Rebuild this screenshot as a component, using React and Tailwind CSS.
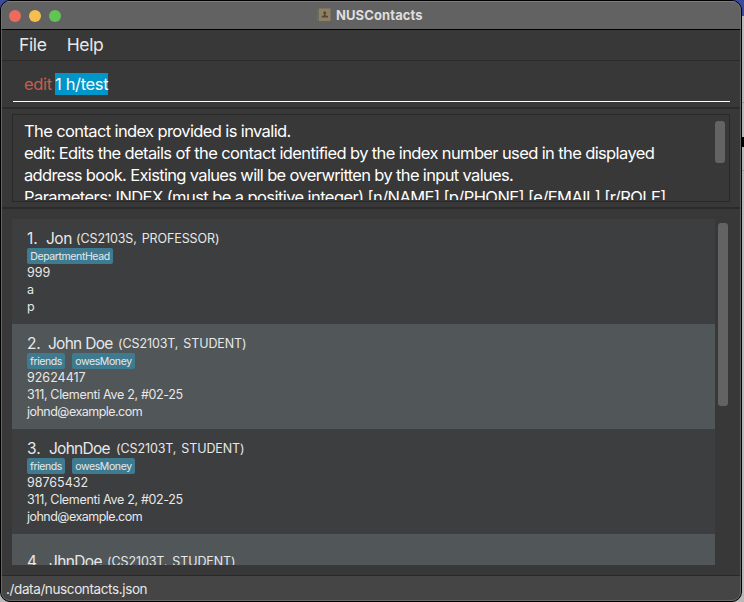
const contacts = [
  {
    index: "1.", name: "Jon", nameClass: "w-[26px] tracking-[-0.5px]", role: "(CS2103S, PROFESSOR)",
    tags: [{ text: "DepartmentHead", cls: "w-[86px]" }],
    phone: "999", address: "a", email: "p",
  },
  {
    index: "2.", name: "John Doe", nameClass: "ml-[2px] w-[66px] tracking-[-0.73px]", role: "(CS2103T, STUDENT)",
    tags: [{ text: "friends", cls: "w-[38px]" }, { text: "owesMoney", cls: "w-[63px]" }],
    phone: "92624417", address: "311, Clementi Ave 2, #02-25", email: "johnd@example.com",
  },
  {
    index: "3.", name: "JohnDoe", nameClass: "ml-[3px] w-[63px] tracking-[-0.73px]", role: "(CS2103T, STUDENT)",
    tags: [{ text: "friends", cls: "w-[38px]" }, { text: "owesMoney", cls: "w-[63px]" }],
    phone: "98765432", address: "311, Clementi Ave 2, #02-25", email: "johnd@example.com",
  },
];

function Heading({ contact }) {
  return (
    <div className="flex h-[20px] items-start whitespace-pre leading-[22px]">
      <span className="w-[19px] text-[15.5px] tracking-[-0.1px]">{contact.index}</span>
      <span className={"text-[15.5px] " + contact.nameClass}>{contact.name}</span>
      <span className="ml-[4px] text-[12.5px] tracking-[-0.1px] [word-spacing:1.5px]">{contact.role}</span>
    </div>
  );
}

function Card({ contact, shaded }) {
  return (
    <div className={"h-[105px] shrink-0 pl-[15px] pt-[9px] " + (shaded ? "bg-[#515658]" : "bg-[#3c3e3f]")}>
      <Heading contact={contact} />
      <div className="flex h-[16px] gap-[7px]">
        {contact.tags.map((tag) => (
          <span key={tag.text} className={"h-[16px] rounded-[2px] bg-[#3e7b91] text-center text-[10.5px] leading-[17px] tracking-[-0.4px] whitespace-nowrap " + tag.cls}>
            {tag.text}
          </span>
        ))}
      </div>
      <div className="text-[12.5px] leading-[17px]">
        <p>{contact.phone}</p>
        <p className="tracking-[-0.33px]">{contact.address}</p>
        <p className="tracking-[-0.52px]">{contact.email}</p>
      </div>
    </div>
  );
}

function BookIcon() {
  return (
    <svg width="14" height="14" viewBox="0 0 14 14" className="mb-px mr-[5px]">
      <rect x="0" y="0.5" width="4" height="12.5" fill="#71685c" />
      <rect x="2" y="0.5" width="11.5" height="12.5" fill="#8f8061" />
      <circle cx="7.7" cy="4.8" r="1.5" fill="#4d4941" />
      <path d="M7 5h1.4v2.3l2.6.7v1.5H4.7V8L7 7.3z" fill="#4d4941" />
    </svg>
  );
}

export default function App() {
  return (
    <div className="relative h-[602px] w-[744px] overflow-hidden bg-[#b9b9b9] font-['Inter','Liberation_Sans',sans-serif] text-[#e8e8e8]">
      <div className="absolute left-0 top-0 h-[16px] w-[744px] bg-[#3d4b9d]" />
      <div className="absolute left-0 top-[16px] h-[570px] w-[8px] bg-black" />
      <div className="absolute left-[742px] top-[102px] h-px w-[2px] bg-[#999999]" />
      <div className="absolute left-[742px] top-[170px] h-px w-[2px] bg-[#999999]" />
      <div className="absolute left-[741px] top-[137px] h-[10px] w-[3px] bg-black" />
      <div className="relative flex h-[602px] w-[742px] flex-col overflow-hidden rounded-[10px] border border-black bg-[#383838]">
        <header className="flex h-[28px] shrink-0 items-center border-t border-[#8a8a8a] bg-[#626262]">
          <div className="flex w-[316px] gap-[8px] pl-[8px]">
            <span className="size-[12px] rounded-full bg-[#ed6a5e]" />
            <span className="size-[12px] rounded-full bg-[#f5bf4f]" />
            <span className="size-[12px] rounded-full bg-[#61c454]" />
          </div>
          <BookIcon />
          <h1 className="mb-[2px] whitespace-nowrap text-[13px] font-bold leading-[16px] tracking-[0.1px] text-[#dedede]">NUSContacts</h1>
        </header>
        <nav className="flex h-[32px] shrink-0 gap-[20px] border-b border-t border-b-[#2b2b2b] border-t-black pl-[18px] text-[17.5px] leading-[30px]">
          <span className="tracking-[-0.35px]">File</span>
          <span className="tracking-[-0.35px]">Help</span>
        </nav>
        <section className="h-[46px] shrink-0 pl-[12px] pr-[11px]">
          <div className="flex h-[41px] items-start border-b border-white pl-[11px] pt-[12px] text-[16.5px] leading-[22px]">
            <span className="w-[31px] tracking-[-0.35px] text-[#c75e4d]">edit</span>
            <span className="w-[53px] whitespace-nowrap bg-[#0096c9] tracking-[-0.35px] text-white">1 h/test</span>
          </div>
        </section>
        <div className="h-[2px] shrink-0 bg-[#2b2b2b]" />
        <section className="h-[98px] shrink-0 pl-[11px] pr-[11px] pt-[5px]">
          <div className="flex h-[88px] justify-between overflow-hidden border border-[#292929] pr-[4px]">
            <div className="h-[85px] overflow-hidden whitespace-nowrap pl-[11px] pt-[5px] text-[16.5px] leading-[22px] text-white">
              <p className="tracking-[-0.62px]">The contact index provided is invalid.</p>
              <p className="tracking-[-0.62px]">edit: Edits the details of the contact identified by the index number used in the displayed</p>
              <p className="tracking-[-0.66px]">address book. Existing values will be overwritten by the input values.</p>
              <p className="tracking-[-0.58px]">Parameters: INDEX (must be a positive integer) [n/NAME] [p/PHONE] [e/EMAIL] [r/ROLE]</p>
            </div>
            <div className="mt-[6px] h-[42px] w-[10px] shrink-0 rounded-[3px] bg-[#636363]" />
          </div>
        </section>
        <div className="h-[2px] shrink-0 bg-[#2b2b2b]" />
        <main className="flex h-[366px] shrink-0 pl-[11px] pt-[10px]">
          <div className="flex h-[346px] w-[703px] flex-col overflow-hidden">
            {contacts.map((contact, i) => (
              <Card key={contact.index} contact={contact} shaded={i % 2 === 1} />
            ))}
            <div className="h-[31px] shrink-0 overflow-hidden bg-[#515658] pl-[15px] pt-[17px]">
              <Heading
                contact={{ index: "4.", name: "JhnDoe", nameClass: "ml-[3px] w-[54px] tracking-[-0.65px]", role: "(CS2103T, STUDENT)" }}
              />
            </div>
          </div>
          <div className="ml-[3px] mt-[4px] h-[183px] w-[10px] rounded-[3px] bg-[#636363]" />
        </main>
        <footer className="grow border-t border-[#292929] bg-[#454545] pl-[5px] text-[13.5px] leading-[26px] tracking-[-0.38px]">
          ./data/nuscontacts.json
        </footer>
        <div className="pointer-events-none absolute inset-0 rounded-[9px] border border-[#777777]/70" />
      </div>
    </div>
  );
}
